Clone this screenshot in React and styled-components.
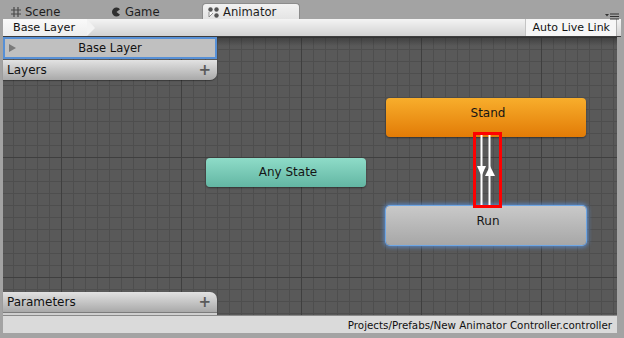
import React from 'react';
import styled, { createGlobalStyle } from 'styled-components';

const GlobalStyle = createGlobalStyle`
  html, body {
    margin: 0;
    padding: 0;
    background: #a3a3a3;
  }
  * {
    box-sizing: border-box;
  }
`;

const font = `"DejaVu Sans", "Liberation Sans", sans-serif`;

const Window = styled.div`
  width: 624px;
  height: 338px;
  display: flex;
  flex-direction: column;
  background: #a3a3a3;
  font-family: ${font};
  font-size: 11px;
  color: #111;
  overflow: hidden;
`;

const TabStrip = styled.div`
  position: relative;
  height: 19px;
  display: flex;
  align-items: flex-end;
  padding-left: 5px;
`;

const Tab = styled.div`
  height: 16px;
  width: ${({ width }) => width}px;
  display: flex;
  align-items: center;
  gap: 4px;
  padding-left: ${({ pad }) => pad}px;
  padding-top: 1px;
  border-radius: 4px 4px 0 0;
  font-size: 11.6px;
  color: #1c1c1c;
  background: ${({ active }) => (active ? 'linear-gradient(#f2f2f2, #e4e4e4)' : 'transparent')};
  border: ${({ active }) => (active ? '1px solid #8c8c8c' : '1px solid transparent')};
  border-bottom: none;
`;

const PaneMenu = styled.div`
  position: absolute;
  right: 5px;
  top: 10px;
`;

const Toolbar = styled.div`
  height: 18px;
  margin: 0 3px;
  display: flex;
  align-items: stretch;
  justify-content: space-between;
  background: linear-gradient(#f4f4f4, #d2d2d2);
  border-bottom: 1px solid #3d3d3d;
`;

const Crumb = styled.div`
  position: relative;
  display: flex;
  align-items: center;
  padding: 0 12px 0 10px;
  background: linear-gradient(#fafafa, #ededed);
  margin-right: 8px;
  font-size: 11.2px;
  &::after {
    content: '';
    position: absolute;
    right: -8px;
    top: 0;
    border-top: 9px solid transparent;
    border-bottom: 8px solid transparent;
    border-left: 8px solid #f3f3f3;
  }
`;

const ToolButton = styled.div`
  display: flex;
  align-items: center;
  padding: 0 6px;
  margin-right: 4px;
  background: #f6f6f6;
  border-left: 1px solid #c4c4c4;
  border-right: 1px solid #b0b0b0;
`;

const Canvas = styled.div`
  position: relative;
  flex: 1;
  margin: 0 7px 0 3px;
  background-color: #595959;
  background-image:
    linear-gradient(rgba(40, 40, 40, 0.55), rgba(40, 40, 40, 0) 9px),
    linear-gradient(90deg, #3f3f3f 1px, transparent 1px),
    linear-gradient(#3f3f3f 1px, transparent 1px),
    linear-gradient(90deg, #4e4e4e 1px, transparent 1px),
    linear-gradient(#4e4e4e 1px, transparent 1px);
  background-size: 100% 100%, 120px 120px, 120px 120px, 12px 12px, 12px 12px;
  background-position: 0 0, 58px 0, 0 0, 10px 0, 0 0;
  background-repeat: no-repeat, repeat, repeat, repeat, repeat;
`;

const LayerPanel = styled.div`
  position: absolute;
  left: 0;
  top: 0;
  width: 214px;
  display: flex;
  flex-direction: column;
  gap: 1px;
`;

const LayerRow = styled.div`
  position: relative;
  height: 22px;
  display: flex;
  align-items: center;
  justify-content: center;
  font-size: 11.5px;
  background: #c0c0c0;
  border: 2px solid #5790d6;
`;

const PlayMark = styled.span`
  position: absolute;
  left: 4px;
  top: 5px;
  border-top: 4px solid transparent;
  border-bottom: 4px solid transparent;
  border-left: 7px solid #7a7a7a;
`;

const PanelHeader = styled.div`
  height: 20px;
  display: flex;
  align-items: center;
  justify-content: space-between;
  padding: 0 6px 0 4px;
  font-size: 12px;
  background: linear-gradient(#e2e2e2, #a9a9a9);
  border-radius: ${({ bottom }) => (bottom ? '0 0 7px 0' : '0 7px 0 0')};
  box-shadow: 0 1px 1px rgba(0, 0, 0, 0.35);
`;

const Plus = styled.span`
  font-size: 15px;
  font-weight: bold;
  color: #5a5a5a;
  line-height: 1;
`;

const ParamPanel = styled.div`
  position: absolute;
  left: 0;
  bottom: 0;
  width: 214px;
  display: flex;
  flex-direction: column;
`;

const ParamFoot = styled.div`
  height: 3px;
  border-top: 1px solid #7c7c7c;
  background: #cfcfcf;
`;

const nodeColors = {
  orange: 'linear-gradient(#f8ae2c, #e27b06)',
  teal: 'linear-gradient(#8edcc8, #63b6a3)',
  grey: 'linear-gradient(#c9c9c9, #a7a7a7)',
};

const Node = styled.div`
  position: absolute;
  left: ${({ x }) => x}px;
  top: ${({ y }) => y}px;
  width: ${({ w }) => w}px;
  height: ${({ h }) => h}px;
  display: flex;
  align-items: center;
  justify-content: center;
  padding-bottom: ${({ h }) => (h > 30 ? 10 : 2)}px;
  padding-left: 4px;
  font-size: 12px;
  color: #151515;
  border-radius: 4px;
  background: ${({ tone }) => nodeColors[tone]};
  box-shadow: ${({ selected }) =>
    selected
      ? '0 0 0 1px #6ea6e4, 0 0 4px 2px rgba(90, 150, 230, 0.8)'
      : '0 1px 2px rgba(0, 0, 0, 0.45)'};
`;

const Transition = styled.svg`
  position: absolute;
  left: 470px;
  top: 95px;
`;

const StatusBar = styled.div`
  height: 18px;
  margin: 0 7px 5px 3px;
  display: flex;
  align-items: center;
  justify-content: flex-end;
  padding-right: 5px;
  font-size: 10.3px;
  background: #dadada;
  border-top: 1px solid #8a8a8a;
`;

const SceneIcon = () => (
  <svg width="10" height="10" viewBox="0 0 10 10">
    <path d="M3 0v10M7 0v10M0 3h10M0 7h10" stroke="#4a4a4a" strokeWidth="1.2" />
  </svg>
);

const GameIcon = () => (
  <svg width="10" height="10" viewBox="0 0 10 10">
    <path d="M9 2.2A4.5 4.5 0 1 0 9 7.8L5.5 5Z" fill="#2e2e2e" />
  </svg>
);

const AnimatorIcon = () => (
  <svg width="11" height="11" viewBox="0 0 11 11">
    <circle cx="2.5" cy="2.5" r="2.2" fill="#555" />
    <circle cx="8.5" cy="2.5" r="2.2" fill="#555" />
    <circle cx="8.5" cy="8.5" r="2.2" fill="#555" />
    <path d="M1 5v5l4-4" fill="#fff" stroke="#777" strokeWidth="0.8" />
  </svg>
);

const MenuIcon = () => (
  <svg width="14" height="7" viewBox="0 0 14 7">
    <path d="M0 1h4L2 3.5Z" fill="#333" />
    <path d="M5 1h9M5 3.5h9M5 6h9" stroke="#333" strokeWidth="1.2" />
  </svg>
);

const App = () => (
  <>
    <GlobalStyle />
    <Window>
      <TabStrip>
        <Tab width={98} pad={5}>
          <SceneIcon />
          <span>Scene</span>
        </Tab>
        <Tab width={99} pad={7}>
          <GameIcon />
          <span>Game</span>
        </Tab>
        <Tab width={98} pad={5} active>
          <AnimatorIcon />
          <span>Animator</span>
        </Tab>
        <PaneMenu>
          <MenuIcon />
        </PaneMenu>
      </TabStrip>
      <Toolbar>
        <Crumb>Base Layer</Crumb>
        <ToolButton>Auto Live Link</ToolButton>
      </Toolbar>
      <Canvas>
        <LayerPanel>
          <LayerRow>
            <PlayMark />
            Base Layer
          </LayerRow>
          <PanelHeader bottom>
            <span>Layers</span>
            <Plus>+</Plus>
          </PanelHeader>
        </LayerPanel>

        <Node tone="orange" x={383} y={61} w={200} h={39}>Stand</Node>
        <Node tone="teal" x={203} y={121} w={160} h={29}>Any State</Node>
        <Node tone="grey" selected x={383} y={169} w={200} h={39}>Run</Node>

        <Transition width="29" height="76" viewBox="0 0 29 76">
          <line x1="8.5" y1="0" x2="8.5" y2="76" stroke="#fff" strokeWidth="2" />
          <line x1="16.5" y1="0" x2="16.5" y2="76" stroke="#fff" strokeWidth="2" />
          <path d="M4 34h9l-4.5 10Z" fill="#fff" />
          <path d="M12 44h10l-5-10Z" fill="#fff" />
          <rect x="1.5" y="1.5" width="26" height="73" fill="none" stroke="#f00" strokeWidth="3" />
        </Transition>

        <ParamPanel>
          <PanelHeader>
            <span>Parameters</span>
            <Plus>+</Plus>
          </PanelHeader>
          <ParamFoot />
        </ParamPanel>
      </Canvas>
      <StatusBar>Projects/Prefabs/New Animator Controller.controller</StatusBar>
    </Window>
  </>
);

export default App;
